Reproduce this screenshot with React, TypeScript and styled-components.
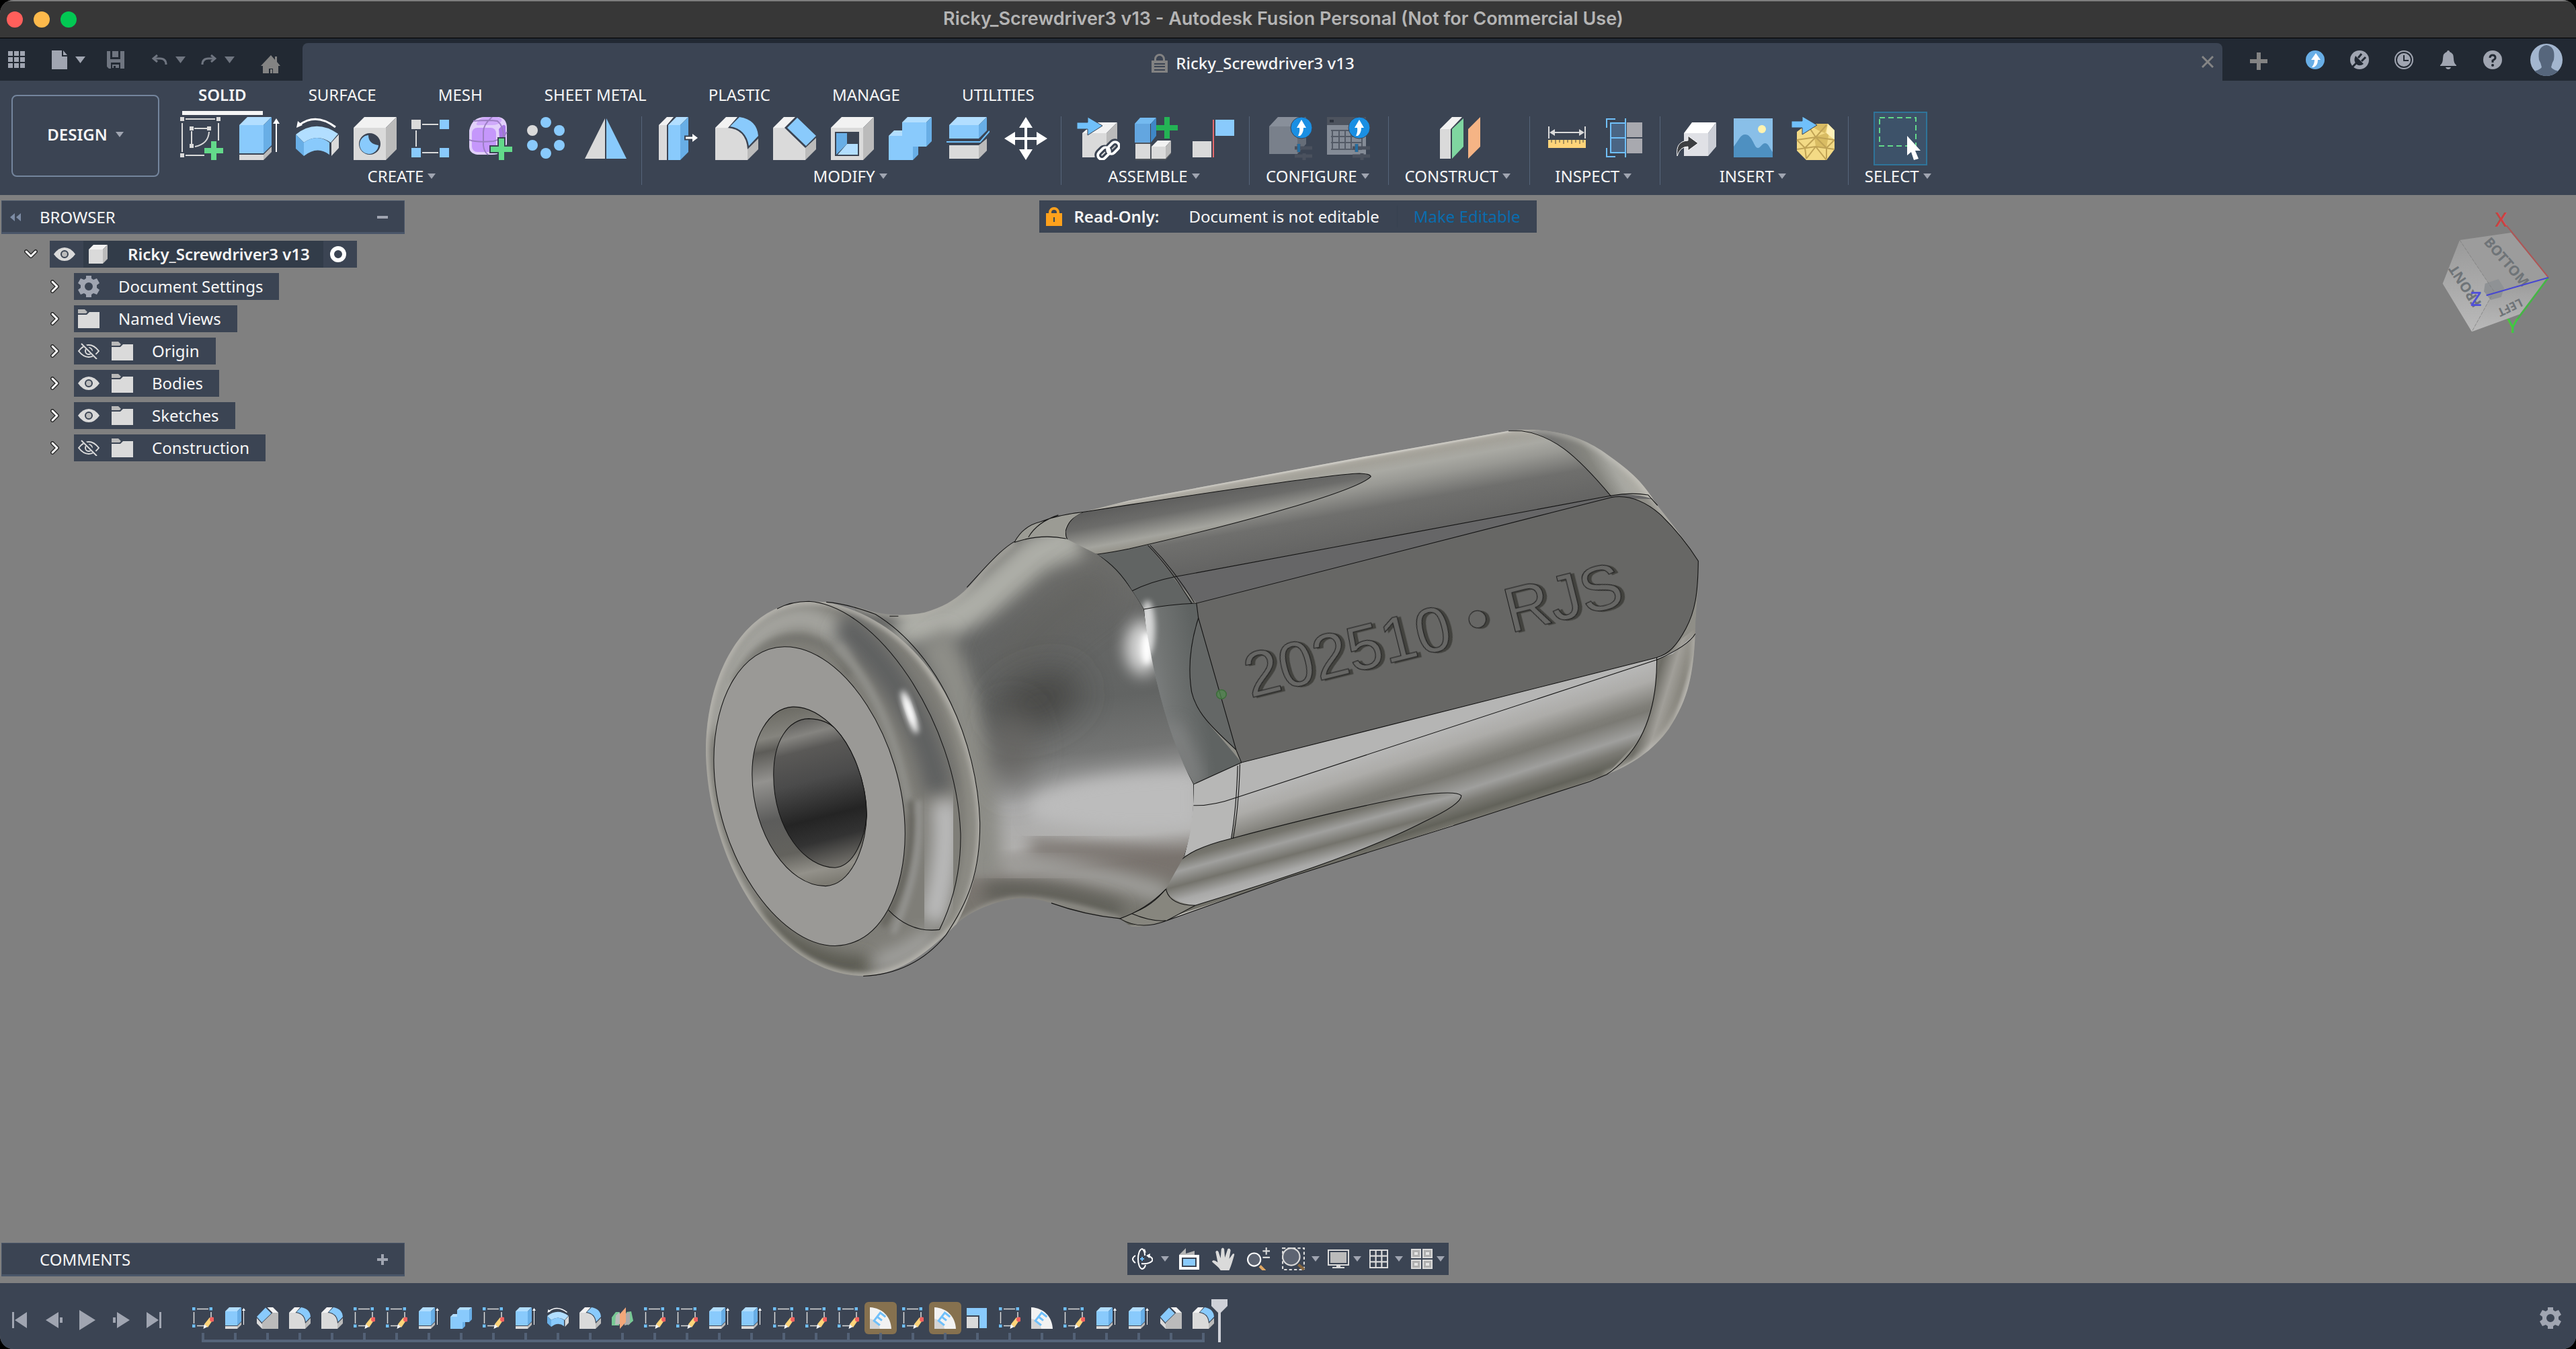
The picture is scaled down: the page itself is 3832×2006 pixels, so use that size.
import React from 'react';
import styled, { createGlobalStyle, css } from 'styled-components';

const color = {
  chrome: '#222933',
  panel: '#3b4453',
  panelDark: '#323c49',
  edge: '#4a5669',
  line: '#56657a',
  text: '#f5f5f5',
  muted: '#a0a5b1',
  dim: '#6f7580',
  canvas: '#808080',
  blue: '#89cafc',
  blueLight: '#b2deff',
  blueDark: '#68aee6',
  gray: '#dadada',
  grayLight: '#f2f2f2',
  grayDark: '#bbbbbb',
  green: '#63d98a',
};

const Global = createGlobalStyle`
  html, body { margin: 0; background: #000; }
  body { font-family: "Noto Sans", "Open Sans", sans-serif; font-size: 24px; line-height: 32px; color: ${color.text}; }
  *, *::before, *::after { box-sizing: border-box; }
  button { font: inherit; color: inherit; background: none; border: 0; padding: 0; margin: 0; cursor: pointer; }
  ul, ol { list-style: none; margin: 0; padding: 0; }
  svg { display: block; flex: none; }
`;

/* ---------- shared icon pieces ---------- */

type IconProps = { w?: number; h?: number; box?: string; children: React.ReactNode };
const Svg = ({ w = 64, h = 64, box = '0 0 64 64', children }: IconProps) => (
  <svg width={w} height={h} viewBox={box} fill="none" aria-hidden="true">{children}</svg>
);
const P = ({ d, f }: { d: string; f: string }) => <path d={d} fill={f} />;

const Caret = ({ w = 12, h = 8, fill = color.muted }: { w?: number; h?: number; fill?: string }) => (
  <svg width={w} height={h} viewBox="0 0 12 8" aria-hidden="true"><path d="M0 0H12L6 8Z" fill={fill} /></svg>
);

const Cube = () => (
  <>
    <P d="M0 16H48V64H0Z" f={color.gray} />
    <P d="M0 16L16 0H64L48 16Z" f={color.grayLight} />
    <P d="M48 16L64 0V48L48 64Z" f={color.grayDark} />
  </>
);

const Badge = () => (
  <>
    <circle cx="48" cy="16" r="16" fill="#1a8fe3" stroke={color.panel} />
    <path d="M48 4L55 16H51Q51 24 46 28H43Q46 22 45 16H41Z" fill="#fff" />
    <path d="M44 40V52M38 46H64M52 54V64M38 58H64" stroke="#4a515e" strokeWidth="5" />
    <path d="M44 40V52" stroke="#256d9f" strokeWidth="4" />
  </>
);

const icons: Record<string, React.ReactNode> = {
  sketchNew: (
    <>
      <path d="M8 3H52M3 9V52M57 9V35M8 57H36M17 21V40M21 17H40M43 22Q42 40 22 44" stroke={color.gray} strokeWidth="2" />
      <path d="M0 0h6v6H0zM54 0h6v6h-6zM0 54h6v6H0zM14 14h6v6h-6zM40 14h6v6h-6zM14 40h6v6h-6z" fill={color.gray} />
      <path d="M46 36h8v10h10v8H54v10h-8V54H36v-8h10z" fill={color.green} />
    </>
  ),
  extrude: (
    <>
      <P d="M2 12H38V54H2Z" f={color.blue} />
      <P d="M2 12L14 0H50L38 12Z" f={color.blueLight} />
      <P d="M38 12L50 0V42L38 54Z" f={color.blueDark} />
      <P d="M2 56H38V64H2Z" f={color.gray} />
      <P d="M38 56L50 44V52L38 64Z" f={color.grayDark} />
      <path d="M57 8V52" stroke="#fff" strokeWidth="2" />
      <P d="M52 10L57 2L62 10Z" f="#fff" />
    </>
  ),
  revolve: (
    <>
      <path d="M59 15Q30 -7 5 12" stroke="#fff" strokeWidth="3" />
      <P d="M1 16L3 6L10 12Z" f="#fff" />
      <P d="M0 26Q30 2 63 25L52 38Q32 24 12 38Z" f={color.blueLight} />
      <P d="M0 26L12 38V58L0 47Z" f={color.blueDark} />
      <P d="M12 38Q32 24 50 38V56Q32 42 12 58Z" f={color.blue} />
      <P d="M53 38L64 26V46L53 58Z" f={color.gray} />
    </>
  ),
  hole: (
    <>
      <Cube />
      <circle cx="24" cy="40" r="16" fill={color.panel} />
      <P d="M22 27Q22 40 37 42A14 14 0 1 1 22 27Z" f={color.blue} />
    </>
  ),
  rectPattern: (
    <>
      <path d="M16 11H40M16 53H40M7 20V44" stroke={color.gray} strokeWidth="2" />
      <P d="M0 4h14v14H0z" f={color.gray} />
      <P d="M42 4h14v14H42zM0 46h14v14H0zM42 46h14v14H42z" f={color.blue} />
    </>
  ),
  form: (
    <>
      <P d="M0 20Q4 0 24 0H44Q56 2 56 16V40Q52 56 34 56H12Q0 54 0 44Z" f="#e2d0fb" />
      <P d="M12 8Q16 0 26 0H42Q50 2 48 6Q44 12 34 12H16Q8 13 12 8Z" f="#cfa9fb" />
      <rect x="4" y="16" width="36" height="36" rx="8" fill="#c597fb" />
      <P d="M44 18Q52 8 54 14V36Q50 46 46 44Z" f="#a877e6" />
      <path d="M0 34Q10 38 36 36Q52 32 56 22M34 0Q20 12 21 24V42Q22 52 28 56M6 6Q30 4 42 6Q52 14 51 34" stroke="#9c7fc4" strokeWidth="2" />
      <path d="M42 30h12v12h12v12H54v12H42V54H30V42h12z" fill={color.panel} />
      <path d="M44 32h8v12h12v8H52v12h-8V52H32v-8h12z" fill={color.green} />
    </>
  ),
  circPattern: (
    <>
      {[[28, 8], [48, 20], [48, 42], [28, 54], [8, 42]].map(([x, y]) => <circle key={`${x}-${y}`} cx={x} cy={y} r="8" fill={color.blue} />)}
      <circle cx="8" cy="20" r="8" fill={color.gray} />
    </>
  ),
  mirror: (
    <>
      <P d="M0 62L30 2V62Z" f={color.gray} />
      <P d="M32 2L62 62H32Z" f={color.blue} />
    </>
  ),
  pressPull: (
    <>
      <P d="M2 12H14V64H2Z" f={color.gray} />
      <P d="M2 12L14 0H24L14 12Z" f={color.grayLight} />
      <P d="M16 12H34V64H16Z" f={color.blue} />
      <P d="M16 12L28 0H46L34 12Z" f={color.blueLight} />
      <P d="M34 12L46 0V52L34 64Z" f={color.blueDark} />
      <path d="M40 31H52" stroke={color.panel} strokeWidth="7" />
      <path d="M42 31H54" stroke="#fff" strokeWidth="3" />
      <P d="M52 25L60 31L52 37Z" f="#fff" />
    </>
  ),
  fillet: (
    <>
      <P d="M0 16H18Q46 18 48 48V64H0Z" f={color.gray} />
      <P d="M0 16L16 0H33L19 16Z" f={color.grayLight} />
      <P d="M22 14L36 0Q62 4 64 28L50 43Q46 18 22 14Z" f={color.blue} />
      <P d="M48 48L64 32V48L48 64Z" f={color.grayDark} />
    </>
  ),
  chamfer: (
    <>
      <P d="M0 16H17L48 46V64H0Z" f={color.gray} />
      <P d="M0 16L16 0H33L17 16Z" f={color.grayLight} />
      <P d="M21 16L36 1L64 28L49 43Z" f={color.blue} />
      <P d="M48 46L64 31V48L48 64Z" f={color.grayDark} />
    </>
  ),
  shell: (
    <>
      <Cube />
      <P d="M6 22H42V58H6Z" f={color.panel} />
      <P d="M8 24H24V40L8 56Z" f={color.blueDark} />
      <P d="M24 40H40V56H10Z" f={color.blueLight} />
    </>
  ),
  combine: (
    <>
      <P d="M0 28H20V8H56V44H36V64H0Z" f={color.blue} />
      <P d="M20 8L28 0H64L56 8ZM0 28L8 20H20V28Z" f={color.blueLight} />
      <P d="M56 8L64 0V36L56 44ZM36 44H44V56L36 64Z" f={color.blueDark} />
    </>
  ),
  split: (
    <>
      <P d="M4 12H48V32H4Z" f={color.blue} />
      <P d="M4 12L16 0H60L48 12Z" f={color.blueLight} />
      <P d="M48 12L60 0V20L48 32Z" f={color.blueDark} />
      <path d="M0 37H50L64 21" stroke="#70c0fa" strokeWidth="2" />
      <P d="M4 42H48V62H4Z" f={color.gray} />
      <P d="M48 42L60 32V50L48 62Z" f={color.grayDark} />
    </>
  ),
  move: (
    <>
      <path d="M32 8V56M8 32H56" stroke="#fff" strokeWidth="4" />
      <P d="M32 0L42 16H22ZM32 64L42 48H22ZM0 32L16 22V42ZM64 32L48 22V42Z" f="#fff" />
    </>
  ),
  insertLink: (
    <>
      <P d="M8 24H44V60H8Z" f={color.gray} />
      <P d="M8 24L26 8H60L44 24Z" f={color.grayLight} />
      <P d="M44 24L60 8V44L44 60Z" f={color.grayDark} />
      <path d="M0 8H16V0L38 13L16 27V18H0Z" fill="#70c0fa" stroke={color.panel} />
      <g strokeWidth="10" stroke={color.panel}><rect x="34" y="46" width="12" height="18" rx="6" transform="rotate(45 40 54)" /><rect x="48" y="36" width="12" height="18" rx="6" transform="rotate(45 54 46)" /></g>
      <g strokeWidth="4" stroke="#fff"><rect x="34" y="44" width="12" height="20" rx="6" transform="rotate(45 40 54)" /><rect x="48" y="36" width="12" height="20" rx="6" transform="rotate(45 54 46)" /></g>
    </>
  ),
  newComponent: (
    <>
      <P d="M0 10H23V38H0Z" f="#63a6e0" />
      <P d="M0 10L8 1H32L24 10Z" f="#74baf0" />
      <P d="M24 10L32 1V28L24 38Z" f="#3f87c7" />
      <P d="M1 40H23V62H1ZM25 44H46V62H25Z" f={color.gray} />
      <P d="M25 44L34 35H54L46 44Z" f={color.grayLight} />
      <P d="M46 44L54 35V53L46 62Z" f={color.grayDark} />
      <path d="M1 39H23M24 40V62M1 63H46L54 54" stroke="#666" strokeWidth="1" />
      <path d="M44 0h8v12h12v8H52v12h-8V20H32v-8h12z" fill="#24b355" />
    </>
  ),
  joint: (
    <>
      <P d="M0 36H28V60H0Z" f={color.gray} />
      <P d="M34 4H62V28H34Z" f={color.blue} />
      <path d="M31 4V60" stroke="#e5696b" strokeWidth="2" />
    </>
  ),
  configBody: (
    <>
      <P d="M0 14H42V55H0Z" f="#79808b" />
      <P d="M0 14L13 0H55L42 14Z" f="#888f9a" />
      <P d="M42 14L55 0V40L42 55Z" f="#666d78" />
      <Badge />
    </>
  ),
  configTable: (
    <>
      <P d="M0 0H58V12H0Z" f="#4d535e" />
      <P d="M0 12H58V56H0Z" f="#848b96" />
      <path d="M6 20H52M6 29H52M6 38H52M6 48H52M8 20V48M18 20V48M27 20V48M36 20V48M52 20V48" stroke="#535a66" strokeWidth="2" />
      <P d="M4 4h6v4H4z" f="#2d333e" />
      <Badge />
    </>
  ),
  plane: (
    <>
      <P d="M2 18H18V62H2Z" f={color.gray} />
      <P d="M2 18L20 0H35L18 18Z" f={color.grayLight} />
      <P d="M20 18L37 2V44L20 62Z" f="#7fd6a0" />
      <P d="M44 18L62 0V44L44 62Z" f="#f5b485" />
    </>
  ),
  measure: (
    <>
      <path d="M5 14V32M59 14V32M10 23H54" stroke={color.gray} strokeWidth="2" />
      <P d="M6 23L14 18V28ZM58 23L50 18V28Z" f={color.gray} />
      <P d="M4 34H60V46H4Z" f="#ffd479" />
      <path d="M9 34v4M15 34v6M21 34v4M27 34v6M33 34v4M39 34v6M45 34v4M51 34v6M56 34v4" stroke="#4a4a44" strokeWidth="1" />
    </>
  ),
  interference: (
    <>
      <P d="M10 8H33V54H10Z" f="#4a6584" />
      <path d="M18 3H5V16M5 46V59H18M33 2V60M10 9H33M10 31H33M10 53H33M11 9V53" stroke="#70c0fa" strokeWidth="2" />
      <P d="M35 8H58V30H35ZM35 32H58V54H35Z" f="#a8a9af" />
    </>
  ),
  derive: (
    <>
      <P d="M12 24H48V58H12Z" f="#e0e1e6" />
      <P d="M12 24L24 8H60L48 24Z" f="#fff" />
      <P d="M48 24L60 8V44L48 58Z" f="#cbced6" />
      <path d="M2 58Q-1 36 18 35V28L33 39L18 50V44Q6 44 2 58Z" fill="#3d3f42" stroke="#fff" />
    </>
  ),
  picture: (
    <>
      <P d="M0 2H58V60H0Z" f="#89bfe8" />
      <circle cx="42" cy="18" r="6" fill="#fff3b0" />
      <P d="M0 44C8 34 10 26 17 26C28 26 30 46 36 46C40 46 42 39 47 39C52 39 54 48 58 52V60H0Z" f="#4e90c1" />
    </>
  ),
  insertMesh: (
    <>
      <P d="M8 22L24 10H54L64 20V48L52 64H22L8 50Z" f="#f3da85" />
      <P d="M24 10H54L50 24L40 20ZM34 30L56 22L52 46L36 44Z" f="#d9bc63" />
      <P d="M54 10L64 20V34L52 24Z" f="#fff0b8" />
      <path d="M8 34L36 30L64 34M8 48L36 44L64 48M36 30L24 12M36 30L52 12M36 44L22 62M36 44L52 64M8 34L20 46L36 30L52 46L64 34M20 46L22 62M52 46V62" stroke="#c0a355" strokeWidth="2" />
      <path d="M0 6H16V-1L38 12L16 26V16H0Z" fill="#70c0fa" stroke={color.panel} />
    </>
  ),
  select: (
    <>
      <path d="M1 1H55V43H1Z" stroke={color.green} strokeWidth="2" strokeDasharray="8 5" />
      <path d="M42 28L62 50H54L59 62L52 64L48 52L42 57Z" fill="#fff" />
    </>
  ),
  sketch: (
    <>
      <path d="M14 5H48M5 14V48M56 14V32M14 55H36" stroke={color.gray} strokeWidth="3" />
      <P d="M0 0h9v9H0zM51 0h9v9h-9zM0 51h9v9H0z" f="#70c0fa" />
      <P d="M36 50L52 30L61 38L46 60Z" f="#ffd479" />
      <P d="M33 64L36 50L45 58Z" f="#fff" />
      <circle cx="59" cy="36" r="7" fill="#f4605f" />
    </>
  ),
  chamferFlip: (
    <g transform="translate(64 0) scale(-1 1)">
      <P d="M0 16H17L48 46V64H0Z" f={color.grayDark} />
      <P d="M0 16L16 0H33L17 16Z" f={color.grayLight} />
      <P d="M21 18L38 1L64 28L49 45Z" f={color.blue} />
      <P d="M48 50L64 32V48L48 64Z" f={color.gray} />
    </g>
  ),
  midplane: (
    <>
      <P d="M0 30L12 14H22V54H0Z" f="#78c995" />
      <P d="M12 24L24 14V50L10 52Z" f="#bcbcbc" />
      <P d="M44 14L58 12L64 40L48 54Z" f="#78c995" />
      <P d="M34 20L54 14V50L38 54Z" f="#aaaaaa" />
      <P d="M24 20L42 0V44L24 64Z" f="#f3a87a" />
    </>
  ),
  emboss: (
    <>
      <P d="M0 0C38 2 62 28 64 64H0Z" f={color.grayLight} />
      <P d="M0 34Q26 38 30 64H0Z" f="#d5d5d5" />
      <path transform="rotate(38 28 33)" d="M40 18H20V48H42M20 33H38" stroke="#70c0fa" strokeWidth="6" />
    </>
  ),
  scale: (
    <>
      <P d="M0 2H60V62H38V24H0Z" f={color.blue} />
      <P d="M0 28H34V62H0Z" f={color.gray} />
    </>
  ),
};

const Icon = ({ name, size = 64 }: { name: string; size?: number }) => <Svg w={size} h={size}>{icons[name]}</Svg>;

/* ---------- window frame ---------- */

const Window = styled.div`
  display: flex;
  flex-direction: column;
  min-height: 100vh;
  background: ${color.canvas};
  border-radius: 20px;
  overflow: hidden;
`;

const TitleBar = styled.header`
  display: grid;
  grid-template-columns: 1fr auto 1fr;
  align-items: center;
  height: 57px;
  padding: 0 24px 0 10px;
  background: #373737;
  border-top: 2px solid #7d7d7d;
  border-bottom: 1px solid #000;
`;

const Lights = styled.div`display: flex; gap: 16px;`;
const Light = styled.button<{ $c: string }>`
  width: 24px;
  height: 24px;
  border-radius: 50%;
  background: ${(p) => p.$c};
`;
const WindowTitle = styled.h1`
  margin: 0;
  padding-bottom: 2px;
  font: 600 27px/32px Inter, sans-serif;
  color: #b4b4b4;
`;

const TopRow = styled.div`
  display: flex;
  height: 63px;
  background: ${color.chrome};
`;
const QuickTools = styled.div`
  display: grid;
  grid-template-columns: 65px 82px 67px 73px 89px auto;
  align-items: center;
  flex: 0 0 450px;
  padding-left: 12px;
`;
const ToolPair = styled.button`display: flex; align-items: center; gap: 12px;`;
const DocTab = styled.div`
  display: flex;
  align-items: center;
  flex: 1;
  margin-top: 7px;
  padding: 0 6px 0 10px;
  background: ${color.panel};
  border-radius: 8px 8px 0 0;
`;
const DocName = styled.div`
  display: flex;
  flex: 1;
  align-items: center;
  justify-content: center;
  gap: 12px;
  padding-top: 4px;
  font-weight: 500;
`;
const SquareButton = styled.button<{ $w?: number }>`
  display: grid;
  place-items: center;
  width: ${(p) => p.$w ?? 32}px;
  height: 48px;
`;
const Account = styled.div`
  display: flex;
  align-items: center;
  gap: 38px;
  flex: 0 0 526px;
  padding-left: 38px;
  > :first-child { margin-right: 16px; }
  > :last-child { margin-left: 4px; }
`;

/* ---------- ribbon ---------- */

const Ribbon = styled.section`
  display: flex;
  height: 170px;
  background: ${color.panel};
`;
const Workspace = styled.button`
  display: flex;
  align-items: center;
  justify-content: center;
  gap: 12px;
  flex: 0 0 220px;
  height: 122px;
  margin: 21px 7px 0 17px;
  padding-bottom: 4px;
  border: 2px solid #74859d;
  border-radius: 8px;
  font-weight: 600;
`;
const RibbonMain = styled.div`flex: 1; min-width: 0;`;
const Tabs = styled.nav`
  display: flex;
  gap: 44px;
  padding-left: 27px;
`;
const Tab = styled.button<{ $active?: boolean }>`
  height: 51px;
  padding: 0 24px 4px;
  border-bottom: 6px solid ${(p) => (p.$active ? color.text : 'transparent')};
  font-weight: ${(p) => (p.$active ? 600 : 400)};
`;
const Groups = styled.div`display: flex; padding: 2px 0 0 1px;`;
const Group = styled.div`
  display: flex;
  flex-direction: column;
  align-items: center;
  gap: 8px;
  height: 102px;
  padding: 1px 20px 0 23px;
  border-right: 1px solid ${color.line};
  &:last-child { border-right: 0; }
`;
const Tools = styled.div`display: flex; gap: 22px;`;
const Tool = styled.button<{ $active?: boolean }>`
  width: 64px;
  height: 64px;
  ${(p) => p.$active && css`
    background: #3d5269;
    box-shadow: 0 0 0 6px #3d5269, 0 0 0 8px #2f7499;
  `}
`;
const GroupLabel = styled.button`
  display: flex;
  align-items: center;
  gap: 6px;
  padding: 0 8px 0 1px;
`;

const groups: { label: string; tools: string[] }[] = [
  { label: 'CREATE', tools: ['sketchNew', 'extrude', 'revolve', 'hole', 'rectPattern', 'form', 'circPattern', 'mirror'] },
  { label: 'MODIFY', tools: ['pressPull', 'fillet', 'chamfer', 'shell', 'combine', 'split', 'move'] },
  { label: 'ASSEMBLE', tools: ['insertLink', 'newComponent', 'joint'] },
  { label: 'CONFIGURE', tools: ['configBody', 'configTable'] },
  { label: 'CONSTRUCT', tools: ['plane'] },
  { label: 'INSPECT', tools: ['measure', 'interference'] },
  { label: 'INSERT', tools: ['derive', 'picture', 'insertMesh'] },
  { label: 'SELECT', tools: ['select'] },
];

/* ---------- viewport ---------- */

const Viewport = styled.main`
  position: relative;
  display: grid;
  grid-template-columns: 1fr auto 1fr;
  grid-template-rows: 1fr auto;
  flex: 1;
  padding: 8px 0;
  background: ${color.canvas};
`;
const Model = styled.svg`
  position: absolute;
  left: calc(50% - 876px);
  top: calc(50% - 469px);
`;
const Panel = styled.section`
  position: relative;
  width: 600px;
  margin-left: 2px;
`;
const PanelHead = styled.div`
  display: flex;
  align-items: center;
  height: 50px;
  padding: 2px 24px 0 12px;
  background: ${color.panel};
  border: 1px solid ${color.edge};
  border-bottom-width: 3px;
`;
const PanelTitle = styled.h2`
  flex: 1;
  margin: 0;
  padding-left: 28px;
  font: inherit;
`;
const PanelIcon = styled.button`display: grid; place-items: center; width: 16px; height: 32px;`;

const Tree = styled.ul`display: grid; gap: 8px; padding-top: 10px;`;
const Row = styled.li<{ $root?: boolean }>`
  display: flex;
  align-items: center;
  gap: 18px;
  height: 40px;
  padding-left: ${(p) => (p.$root ? 34 : 70)}px;
`;
const Chip = styled.div`
  display: flex;
  align-items: center;
  gap: 18px;
  height: 40px;
  padding: 0 24px 0 6px;
  background: ${color.panel};
`;
const ChipText = styled.span`padding-left: 10px;`;
const RootChip = styled.div`display: flex; height: 40px; background: ${color.panel};`;
const RootCell = styled.button`display: grid; place-items: center; width: 50px; height: 40px; padding-right: 6px;`;
const RootName = styled.div`
  display: flex;
  align-items: center;
  gap: 30px;
  padding: 0 20px 0 8px;
  background: ${color.panelDark};
  font-weight: 600;
`;

const ReadOnly = styled.div`
  position: relative;
  display: flex;
  align-items: center;
  align-self: start;
  justify-self: center;
  height: 48px;
  padding: 0 24px 0 10px;
  background: ${color.panel};
`;
const LockLabel = styled.strong`padding: 0 44px 0 17px; font-weight: 600;`;
const Notice = styled.span`padding-right: 26px;`;
const EditLink = styled.a`
  padding-left: 24px;
  border-left: 1px solid #364150;
  color: #0a6cad;
  text-decoration: none;
`;
const CubeBox = styled.div`position: relative; justify-self: end; margin-top: 2px;`;

const NavBar = styled.div`
  position: relative;
  display: flex;
  align-items: center;
  align-self: end;
  justify-self: center;
  height: 48px;
  margin-bottom: 4px;
  padding: 0 6px;
  background: ${color.panel};
`;
const NavItem = styled.button<{ $gap: number; $inner: number }>`
  display: flex;
  align-items: center;
  gap: ${(p) => p.$inner}px;
  margin-right: ${(p) => p.$gap}px;
`;

/* ---------- timeline ---------- */

const Timeline = styled.footer`
  display: flex;
  height: 98px;
  padding: 28px 22px 0 18px;
  background: ${color.panel};
`;
const Player = styled.div`display: flex; gap: 24px; height: 54px; align-items: center; margin-right: 34px;`;
const Track = styled.ol`display: flex; flex: 1;`;
const Step = styled.li<{ $last?: boolean }>`
  display: flex;
  flex-direction: column;
  width: 48px;
  > button { order: -1; }
  &::before {
    content: '';
    position: relative;
    width: 4px;
    height: 10px;
    margin: -2px 0 0 22px;
    background: ${color.line};
    opacity: .9;
  }
  &::after {
    content: '';
    width: ${(p) => (p.$last ? 4 : 48)}px;
    height: 4px;
    margin-left: 22px;
    background: ${color.line};
  }
`;
const Feature = styled.button<{ $hot?: boolean }>`
  display: grid;
  place-items: center;
  width: 48px;
  height: 48px;
  border-radius: 6px;
  background: ${(p) => (p.$hot ? '#86714f' : 'transparent')};
`;
const Marker = styled.li`margin: -4px 0 0 -12px;`;

const features = [
  'sketch', 'extrude', 'chamferFlip', 'fillet', 'fillet', 'sketch', 'sketch', 'extrude', 'combine', 'sketch',
  'extrude', 'revolve', 'fillet', 'midplane', 'sketch', 'sketch', 'extrude', 'extrude', 'sketch', 'sketch',
  'sketch', 'emboss!', 'sketch', 'emboss!', 'scale', 'sketch', 'emboss', 'sketch', 'extrude', 'extrude',
  'chamferFlip', 'fillet',
];

/* ---------- small glyphs ---------- */

const Eye = () => (
  <Svg w={32} h={20} box="0 0 32 20">
    <P d="M0 10Q7 0 16 0T32 10Q25 20 16 20T0 10Z" f={color.gray} />
    <circle cx="16" cy="10" r="5" fill={color.grayDark} stroke={color.panel} strokeWidth="2" />
  </Svg>
);
const EyeOff = () => (
  <Svg w={32} h={24} box="0 0 32 24">
    <path d="M1 12Q8 3 16 3T31 12Q24 21 16 21T1 12Z" stroke={color.gray} strokeWidth="2" />
    <circle cx="16" cy="12" r="5" stroke={color.gray} strokeWidth="2" />
    <path d="M6 0L29 23" stroke={color.panel} strokeWidth="5" />
    <path d="M5 1L28 24" stroke={color.gray} strokeWidth="2" />
  </Svg>
);
const Folder = () => (
  <Svg w={32} h={28} box="0 0 32 28">
    <P d="M0 0H10L14 4L12 6H0Z" f="#b9b9b9" />
    <P d="M0 8H13L17 4H32V28H0Z" f={color.gray} />
  </Svg>
);
const Gear = ({ size = 32 }: { size?: number }) => (
  <Svg w={size} h={size} box="0 0 32 32">
    <path fill={color.muted} fillRule="evenodd" d="M12 0h8v4l3 2 5-2 4 7-4 3v4l4 3-4 7-5-2-3 2v4h-8v-4l-3-2-5 2-4-7 4-3v-4l-4-3 4-7 5 2 3-2zM16 10a6 6 0 1 0 0 12a6 6 0 0 0 0-12z" />
  </Svg>
);
const Chevron = ({ open }: { open?: boolean }) => (
  <Svg w={20} h={20} box="0 0 20 20">
    <g transform={open ? 'rotate(90 10 10)' : undefined} strokeLinecap="round" strokeLinejoin="round">
      <path d="M6 3L13 10L6 17" stroke="#2b2b2b" strokeWidth="6" />
      <path d="M6 3L13 10L6 17" stroke="#fff" strokeWidth="3" />
    </g>
  </Svg>
);
const UndoGlyph = ({ flip }: { flip?: boolean }) => (
  <Svg w={23} h={16} box="0 0 23 16">
    <g transform={flip ? 'translate(23 0) scale(-1 1)' : undefined} stroke={color.dim} strokeWidth="3">
      <path d="M2 6H12Q21 6 21 15" /><path d="M8 1L2 6L8 11" />
    </g>
  </Svg>
);

const treeItems: { name: string; kind: 'gear' | 'folder'; eye?: 'on' | 'off' }[] = [
  { name: 'Document Settings', kind: 'gear' },
  { name: 'Named Views', kind: 'folder' },
  { name: 'Origin', kind: 'folder', eye: 'off' },
  { name: 'Bodies', kind: 'folder', eye: 'on' },
  { name: 'Sketches', kind: 'folder', eye: 'on' },
  { name: 'Construction', kind: 'folder', eye: 'off' },
];

/* ---------- 3D model drawing ---------- */

const stops = (list: [number, string][]) => list.map(([o, c]) => <stop key={o} offset={o} stopColor={c} />);

const lipPath = 'M350 500C170 503 60 690 57 900C60 1200 250 1512 505 1516C620 1512 700 1440 770 1375C815 1300 837 1210 837 1100C830 850 690 560 400 502Z';
const neckPath = 'M480 512C540 534 600 545 680 530C780 505 820 445 850 410C880 380 905 355 935 338L975 328Q1030 318 1082 330L1172 373C1230 415 1262 455 1303 521C1330 720 1380 880 1444 996C1446 1090 1436 1140 1418 1190L1366 1280Q1310 1335 1235 1360C1150 1352 1090 1335 1040 1318C1000 1306 975 1304 950 1305C880 1310 800 1345 770 1375L600 1300L500 700Z';
const bodyPath = 'M-213 372C-190 335 -160 320 -123 309L0 276L640 148L1005 78C1120 65 1200 95 1260 140C1340 200 1360 225 1400 290C1440 345 1475 390 1508 448C1508 540 1500 620 1500 655C1494 790 1475 850 1430 925C1390 985 1330 1030 1260 1057L1220 1075L860 1200L420 1348L100 1470Q35 1492 5 1487L-25 1465L97 1370L-85 430Z';
const upperFlute = 'M640 208C600 250 300 340 0 413Q-50 424 -86 429C-140 422 -170 400 -169 363Q-160 325 -123 309L0 288C300 238 560 200 610 199Q640 200 640 208Z';
const lowerFlute = 'M880 1115C870 1103 820 1106 760 1115C600 1145 400 1200 270 1237C190 1258 150 1280 120 1315C100 1345 95 1365 98 1385Q110 1427 175 1427C300 1385 600 1290 780 1190Q880 1140 880 1115Z';

const EngravedText = styled.text`
  font: 94px "Liberation Sans", Arial, sans-serif;
  fill: #676765;
  stroke: #1a1a1a;
  stroke-width: 1px;
  filter: drop-shadow(5px 2px 0 #42423e);
`;

const ScrewdriverHandle = () => (
  <Model width="1500" height="830" viewBox="1040 630 1500 830" fill="none" role="img" aria-label="Screwdriver handle">
    <defs>
      <filter id="b10" x="-50%" y="-50%" width="200%" height="200%"><feGaussianBlur stdDeviation="8" /></filter>
      <filter id="b20" x="-50%" y="-50%" width="200%" height="200%"><feGaussianBlur stdDeviation="22" /></filter>
      <filter id="b30" x="-100%" y="-100%" width="300%" height="300%"><feGaussianBlur stdDeviation="46" /></filter>
      <clipPath id="lipClip"><path d={lipPath} /></clipPath>
      <clipPath id="neckClip"><path d={neckPath} /></clipPath>
      <clipPath id="bodyClip"><path d={bodyPath} /></clipPath>
      <linearGradient id="gTop" gradientUnits="userSpaceOnUse" x1="800" y1="118" x2="845" y2="348">{stops([[0, '#cfcdc6'], [0.03, '#a19e95'], [0.2, '#a9a9a3'], [0.35, '#999994'], [0.62, '#6f6f6d'], [1, '#646463']])}</linearGradient>
      <linearGradient id="gBottom" gradientUnits="userSpaceOnUse" x1="900" y1="905" x2="987" y2="1155">{stops([[0, '#b7b7b6'], [0.18, '#adaca9'], [0.42, '#807f79'], [0.48, '#7b7a74'], [0.68, '#9f9f9d'], [0.8, '#7c7b75'], [0.93, '#62625a'], [1, '#77766e']])}</linearGradient>
      <linearGradient id="gGrooveT" gradientUnits="userSpaceOnUse" x1="0" y1="288" x2="24" y2="410">{stops([[0, '#5e5e5d'], [0.35, '#6c6c6a'], [0.8, '#a4a49e'], [1, '#939188']])}</linearGradient>
      <linearGradient id="gGrooveB" gradientUnits="userSpaceOnUse" x1="300" y1="1222" x2="345" y2="1375">{stops([[0, '#6a6a62'], [0.15, '#77766f'], [0.35, '#a0a09e'], [0.6, '#74736c'], [0.85, '#a9a9a8'], [1, '#b4b4b3']])}</linearGradient>
      <linearGradient id="gCap" gradientUnits="userSpaceOnUse" x1="1180" y1="210" x2="1330" y2="130">{stops([[0, '#757573'], [0.35, '#85857f'], [0.6, '#a6a6a0'], [1, '#b8b5ab']])}</linearGradient>
      <linearGradient id="gCapB" gradientUnits="userSpaceOnUse" x1="1340" y1="850" x2="1480" y2="890">{stops([[0, '#7d7c76'], [0.25, '#6e6d66'], [0.5, '#a19f99'], [0.75, '#86847c'], [1, '#c9c7c2']])}</linearGradient>
      <linearGradient id="gFacet" gradientUnits="userSpaceOnUse" x1="60" y1="800" x2="190" y2="780">{stops([[0, '#7c7f7f'], [0.35, '#717473'], [1, '#5f6362']])}</linearGradient>
      <linearGradient id="gNeck" gradientUnits="userSpaceOnUse" x1="1000" y1="400" x2="1100" y2="1340">{stops([[0, '#70706d'], [0.2, '#656665'], [0.4, '#626463'], [0.55, '#747574'], [0.68, '#aaaaaa'], [0.8, '#b0afad'], [0.88, '#7b7570'], [1, '#77766f']])}</linearGradient>
      <linearGradient id="gHole" gradientUnits="userSpaceOnUse" x1="340" y1="818" x2="440" y2="1222">{stops([[0, '#63625f'], [0.1, '#858480'], [0.2, '#5a5957'], [0.4, '#4b4b4b'], [0.65, '#242424'], [0.8, '#333'], [1, '#77756f']])}</linearGradient>
      <linearGradient id="gChamfer" gradientUnits="userSpaceOnUse" x1="260" y1="790" x2="360" y2="1272">{stops([[0, '#6a6962'], [0.15, '#85847e'], [0.22, '#5d5c58'], [0.38, '#93928f'], [0.6, '#5c5c5b'], [0.8, '#63625d'], [0.92, '#93918a'], [1, '#7d7b73']])}</linearGradient>
    </defs>

    {/* hexagonal grip */}
    <g transform="translate(1680 600) scale(.56122 .52296)">
      <g clipPath="url(#bodyClip)">
        <path d={bodyPath} fill="#8f8e87" />
        <path d="M-240 400L-150 300L1005 60L1277 60V262L120 493L7 533Z" fill="url(#gTop)" />
        <path d="M1050 78C1120 92 1180 140 1277 264L1390 272L1520 448L1500 60Z" fill="url(#gCap)" />
        <path d="M-110 300L640 148L1005 78C1120 65 1200 95 1260 140C1340 200 1360 225 1400 290L1508 448" stroke="#d2d0ca" strokeWidth="8" filter="url(#b10)" />
        <path d="M285 1118L1400 726V900L1265 1055L860 1210L100 1490L-40 1480L145 1287Z" fill="url(#gBottom)" />
        <path d="M1398 723L1500 640L1520 900L1260 1060Q1400 960 1398 723Z" fill="url(#gCapB)" />
        <path d="M1500 660C1494 790 1475 850 1430 925C1390 985 1330 1030 1260 1057" stroke="#cfcdc8" strokeWidth="9" filter="url(#b10)" />
        <path d="M100 1466L860 1200" stroke="#c5c3bd" strokeWidth="4" />
        <path d="M297 1021L1397 723Q1470 700 1500 655L1440 712L285 1120Z" fill="#b5b5b4" />
        <path d="M116 493L1277 262Q1330 252 1390 272L1277 268L178 568Z" fill="#666667" />
        <path d="M178 568L1277 267C1325 258 1370 280 1410 318C1450 360 1480 400 1508 448C1507 540 1500 590 1475 640C1450 690 1430 712 1397 723L297 1021L283 985L183 610Z" fill="#676765" />
        <path d="M-85 430L49 403L170 568L38 585L7 533Z" fill="#616463" />
        <path d="M38 585Q100 572 178 568L183 610Q150 720 165 820C180 890 240 940 297 1021L170 1083C110 970 55 810 38 585Z" fill="url(#gFacet)" />
        <ellipse cx="48" cy="640" rx="20" ry="80" fill="#fff" filter="url(#b10)" opacity=".7" />
        <path d="M183 610Q150 720 165 820C180 880 225 930 283 985Z" fill="#646766" />
        <path d="M110 910Q160 1000 175 1090" stroke="#8a8b8b" strokeWidth="40" filter="url(#b20)" opacity=".7" />
        <path d="M170 1083L297 1021L290 1120L270 1237L145 1287Q170 1190 170 1083Z" fill="#b7b7b6" />
        <path d={upperFlute} fill="url(#gGrooveT)" />
        <path d={lowerFlute} fill="url(#gGrooveB)" />
        <path d="M97 1380L5 1450L-25 1465L35 1492L100 1470L175 1427Q110 1420 97 1380Z" fill="#87867e" />
      </g>
      <g stroke="#131313" strokeWidth="2">
        <path d={upperFlute} />
        <path d={lowerFlute} />
        <path d="M1005 78H1040C1120 90 1180 140 1277 264M120 493L1277 262Q1330 252 1375 260L1400 290M1277 267L178 568L183 610L283 985L297 1021L1397 723M1277 267C1325 258 1370 280 1410 318C1450 360 1480 400 1508 448C1507 540 1500 590 1475 640C1450 690 1430 712 1397 723" />
        <path d="M1500 655Q1480 690 1400 728L285 1120Q220 1145 170 1143M1398 723Q1400 960 1265 1055L1220 1075L860 1200L420 1348L100 1470" />
        <path d="M-85 430Q-30 465 7 533L38 585Q100 572 178 568M7 533Q55 507 120 493M49 403Q110 470 165 568M55 403Q120 475 172 566M38 585C55 810 110 970 170 1083L297 1021M183 610Q150 720 165 820C180 890 240 940 283 985M170 1083Q170 1190 145 1287M287 1030Q284 1150 270 1237M293 1026Q290 1150 275 1237" />
        <path d="M97 1380Q60 1430 5 1450L-25 1465Q30 1500 100 1470L175 1427M5 1450Q60 1475 100 1470" />
      </g>
      <circle cx="244" cy="827" r="13" fill="#4f8a4c" fillOpacity=".7" stroke="#3d6d3b" strokeWidth="3" />
    </g>

    {/* concave neck */}
    <g transform="translate(1020 620) scale(.52296 .54847)">
      <g clipPath="url(#neckClip)">
        <path d={neckPath} fill="url(#gNeck)" />
        <path d="M600 560C760 590 860 480 1000 370L1120 330" stroke="#adaea7" strokeWidth="100" filter="url(#b20)" />
        <path d="M700 600Q840 800 850 1250" stroke="#8d8d87" strokeWidth="100" filter="url(#b20)" />
        <path d="M1200 440Q1000 560 900 700" stroke="#62625f" strokeWidth="110" filter="url(#b30)" opacity=".7" />
        <ellipse cx="1000" cy="770" rx="130" ry="70" transform="rotate(-20 1000 770)" fill="#464645" filter="url(#b30)" />
        <ellipse cx="930" cy="900" rx="50" ry="110" fill="#666562" filter="url(#b30)" />
        <path d="M980 1040Q1100 960 1460 960V1120Q1200 1140 980 1090Z" fill="#bcbcbc" filter="url(#b20)" />
        <path d="M980 1165Q1200 1175 1440 1220" stroke="#78726d" strokeWidth="44" filter="url(#b20)" />
        <path d="M900 1220Q1150 1225 1370 1295" stroke="#a6a6a3" strokeWidth="44" filter="url(#b20)" />
        <path d="M850 1290Q1000 1262 1240 1345" stroke="#5c5b55" strokeWidth="46" filter="url(#b20)" />
        <path d="M770 1380Q860 1310 950 1308T1235 1362" stroke="#c2c0ba" strokeWidth="7" filter="url(#b10)" />
        <path d="M480 512C540 534 600 545 680 530C780 505 820 445 850 410L935 338" stroke="#bab8b0" strokeWidth="10" filter="url(#b10)" />
        <ellipse cx="1300" cy="625" rx="50" ry="74" fill="#fff" filter="url(#b20)" opacity=".75" />
        <ellipse cx="1312" cy="628" rx="16" ry="44" fill="#fff" filter="url(#b10)" />
      </g>
      <path d="M935 340Q960 295 1010 284Q1060 265 1130 258Q1088 278 1080 300V328Q1010 316 935 340Z" fill="#9b9b94" />
      <g stroke="#131313" strokeWidth="2">
        <path d="M935 340Q960 295 1010 284Q1060 265 1130 258M1082 330Q1010 316 935 340M975 326Q1000 285 1060 266" />
        <path d="M935 338C905 355 880 380 850 410L800 462M580 540H605M1366 1280Q1310 1335 1235 1360C1150 1352 1090 1335 1040 1318" />
      </g>

      {/* collar */}
      <g clipPath="url(#lipClip)">
        <path d={lipPath} fill="#7f7e78" />
        <path d="M90 860C110 680 200 540 340 545Q420 560 470 640" stroke="#a8a8a3" strokeWidth="60" filter="url(#b20)" />
        <path d="M140 720Q200 610 300 600T470 700" stroke="#69686180" strokeWidth="26" filter="url(#b10)" />
        <path d="M440 560C600 680 700 880 720 1020" stroke="#5f6160" strokeWidth="80" filter="url(#b20)" />
        <path d="M430 620Q590 780 640 1080" stroke="#8f8f8a" strokeWidth="22" filter="url(#b10)" />
        <path d="M735 1040Q755 1180 700 1370" stroke="#bababa" strokeWidth="76" filter="url(#b20)" />
        <path d="M640 1040Q660 1220 560 1380" stroke="#63625b" strokeWidth="18" filter="url(#b10)" />
        <path d="M662 1040Q676 1220 590 1400" stroke="#9a9a97" strokeWidth="14" filter="url(#b10)" />
        <path d="M200 1350Q330 1490 520 1490" stroke="#55544c" strokeWidth="50" filter="url(#b20)" />
        <path d="M540 1480Q630 1460 700 1400" stroke="#a8a8a6" strokeWidth="40" filter="url(#b20)" />
        <path d="M560 540C720 650 815 900 812 1100Q810 1260 740 1400" stroke="#8b8a83" strokeWidth="30" filter="url(#b10)" />
        <path d={lipPath} stroke="#cac8c1" strokeWidth="12" filter="url(#b10)" />
        <ellipse cx="637" cy="800" rx="12" ry="62" transform="rotate(-20 637 800)" fill="#fff" filter="url(#b10)" />
        <ellipse cx="637" cy="796" rx="6" ry="36" transform="rotate(-20 637 796)" fill="#fff" filter="url(#b10)" />
      </g>
      <g stroke="#131313" strokeWidth="2">
        <path d="M260 520Q300 500 350 500C540 510 770 820 782 1130Q784 1270 722 1390Q640 1400 577 1337" />
        <path d="M400 502Q450 504 540 535C720 640 830 880 837 1100C838 1240 800 1320 740 1405Q650 1510 505 1516" />
        <path d="M280 623C160 625 80 760 80 930C80 1180 260 1434 425 1434C560 1430 624 1280 624 1130C624 880 450 620 280 623Z" fill="#9a9996" />
        <path d="M305 786C235 790 188 870 189 970C190 1130 290 1272 398 1272C470 1268 512 1170 515 1080C515 1000 480 900 425 845C390 810 350 785 305 786Z" fill="url(#gChamfer)" />
        <path d="M350 818C290 820 250 880 250 970C250 1120 340 1222 425 1222C480 1218 510 1140 515 1080C514 980 470 890 425 845Q400 820 350 818Z" fill="url(#gHole)" />
      </g>
    </g>

    <EngravedText x="1860" y="1038" transform="rotate(-14 1860 1038)">202510 • RJS</EngravedText>
  </Model>
);

const CubeText = styled.text<{ $c: string; $s: number; $w?: number }>`
  font-family: "Noto Sans", sans-serif;
  font-size: ${(p) => p.$s}px;
  font-weight: ${(p) => p.$w ?? 700};
  fill: ${(p) => p.$c};
`;

const ViewCube = () => (
  <svg width="232" height="220" viewBox="0 0 696 660" role="img" aria-label="View cube">
    <defs>
      <linearGradient id="cf" x1="0" y1="0" x2="0" y2="1">{stops([[0, '#9a9a9a'], [1, '#bababa']])}</linearGradient>
    </defs>
    <path d="M177 171L406 138L573 338L330 400Z" fill="#9c9c9c" />
    <path d="M177 171L330 400L231 580L101 365Z" fill="url(#cf)" />
    <path d="M330 400L573 338L445 502L231 580Z" fill="url(#cf)" />
    <path d="M290 365L350 345L375 385L362 425L315 438L285 400Z" fill="#8f9295" />
    <path d="M177 171L330 400L231 580" stroke="#7b7b7b" strokeWidth="2" strokeDasharray="14 6" fill="none" />
    <CubeText $c="#6f7478" $s={62} transform="translate(282 182) rotate(49)">BOTTOM</CubeText>
    <CubeText $c="#6f7478" $s={62} transform="translate(276 452) rotate(237)">FRONT</CubeText>
    <CubeText $c="#6f7478" $s={52} transform="translate(446 430) rotate(154)">LEFT</CubeText>
    <path d="M386 106L573 338" stroke="#b05555" strokeWidth="6" />
    <path d="M573 338L430 530" stroke="#46b546" strokeWidth="8" />
    <path d="M573 338L296 418" stroke="#4747d1" strokeWidth="6" />
    <CubeText $c="#cf4141" $s={88} $w={500} x="335" y="110">X</CubeText>
    <CubeText $c="#40c840" $s={88} $w={500} x="388" y="584">Y</CubeText>
    <CubeText $c="#5050d8" $s={88} $w={500} x="224" y="464">Z</CubeText>
  </svg>
);

/* ---------- page ---------- */

const navTools: { label: string; w: number; gap: number; inner?: number; art: React.ReactNode }[] = [
  {
    label: 'Orbit', w: 32, gap: 14, inner: 12,
    art: <><path d="M16 1C8 3 8 29 16 31Q20 30 21 25M20 11Q20 3 16 1M6 11Q-2 16 6 22M24 11Q33 14 31 19Q26 24 15 23" stroke="#fff" strokeWidth="2" /><path d="M17 4L22 7L20 1ZM22 11L28 8L27 15Z" fill="#fff" /><path d="M16 13V19M13 16H19" stroke="#70c0fa" strokeWidth="2" /></>,
  },
  {
    label: 'Look at', w: 32, gap: 18,
    art: <><path d="M1 10L11 0V8L24 4V10Z" fill="#b5b5b5" /><path d="M1 10H31V32H1Z" fill="#fff" /><path d="M5 14H27V28H5Z" fill={color.panel} /><path d="M7 16H25V26H7Z" fill={color.blue} /></>,
  },
  {
    label: 'Pan', w: 34, gap: 18,
    art: <path d="M12 32C9 27 4 24 0 20C1 17 4 18 8 21L5 6Q7 3 9 6L12 15L13 2Q15 -1 17 2L18 14L22 2Q25 0 26 4L24 16L29 9Q32 8 31 11C29 18 27 25 24 32Z" fill={color.gray} />,
  },
  {
    label: 'Zoom', w: 34, gap: 18,
    art: <><circle cx="10" cy="17" r="9" fill="#5d6472" stroke="#fff" strokeWidth="2" /><path d="M18 26L25 33" stroke="#e0a763" strokeWidth="4" /><path d="M27 0V10M22 5H32M22 14H32" stroke={color.gray} strokeWidth="2" /></>,
  },
  {
    label: 'Fit', w: 34, gap: 12, inner: 10,
    art: <><path d="M1 1H31V31H1Z" stroke={color.gray} strokeWidth="2" strokeDasharray="4 3" /><circle cx="13" cy="13" r="12" fill="#5d6472" stroke={color.gray} strokeWidth="2" /><path d="M23 24L31 31" stroke="#85663f" strokeWidth="4" /></>,
  },
  {
    label: 'Display settings', w: 32, gap: 12, inner: 6,
    art: <><path d="M0 2H32V26H0Z" fill={color.gray} /><path d="M2 4H30V24H2Z" fill={color.panel} /><path d="M4 6H28V22H4Z" fill={color.grayDark} /><path d="M13 26H19V28H25V30H7V28H13Z" fill={color.gray} /></>,
  },
  {
    label: 'Grid and snaps', w: 28, gap: 12, inner: 10,
    art: <path d="M1 1H31V31H1ZM11 1V31M21 1V31M1 11H31M1 21H31" stroke={color.gray} strokeWidth="2.5" />,
  },
  {
    label: 'Viewports', w: 32, gap: 0, inner: 6,
    art: <>{[[0, 1], [17, 1], [0, 17], [17, 17]].map(([x, y]) => <g key={`${x}${y}`}><rect x={x} y={y} width="15" height="14" fill={color.gray} /><rect x={x + 2} y={y + 2} width="11" height="10" fill="#b0b0b0" /><rect x={x + 5} y={y + 5} width="5" height="4" fill="#e4e4e4" /></g>)}</>,
  },
];

const player: { label: string; d: string }[] = [
  { label: 'Go to start', d: 'M0 4H3V28H0ZM22 4V28L4 16Z' },
  { label: 'Step back', d: 'M0 16L19 4V28ZM21 12H25V20H21Z' },
  { label: 'Play', d: 'M0 1L24 16L0 31Z' },
  { label: 'Step forward', d: 'M0 12H4V20H0ZM6 4V28L25 16Z' },
  { label: 'Go to end', d: 'M0 4V28L18 16ZM19 4H22V28H19Z' },
];

export default function App() {
  return (
    <Window>
      <Global />
      <TitleBar>
        <Lights>
          <Light $c="#ff5f5b" aria-label="Close window" />
          <Light $c="#fdb94b" aria-label="Minimize window" />
          <Light $c="#02c853" aria-label="Zoom window" />
        </Lights>
        <WindowTitle>Ricky_Screwdriver3 v13 - Autodesk Fusion Personal (Not for Commercial Use)</WindowTitle>
      </TitleBar>

      <TopRow>
        <QuickTools>
          <ToolPair aria-label="Data panel">
            <Svg w={26} h={26} box="0 0 26 26">
              {[0, 9, 18].map((y) => [0, 9, 18].map((x) => <rect key={`${x}-${y}`} x={x} y={y} width="7" height="7" fill={color.muted} />))}
            </Svg>
          </ToolPair>
          <ToolPair aria-label="File">
            <Svg w={23} h={28} box="0 0 23 28"><P d="M0 0H15V9H23V28H0ZM17 0L23 7H17Z" f={color.muted} /></Svg>
            <Caret w={15} h={10} />
          </ToolPair>
          <ToolPair aria-label="Save">
            <Svg w={26} h={26} box="0 0 26 26"><path fill={color.dim} fillRule="evenodd" d="M0 0H5V12H20V0H26V26H3L0 23ZM8 0H17V9H8ZM6 17V26H20V17ZM8 20H18V25H8ZM10 22H13V25H10Z" /></Svg>
          </ToolPair>
          <ToolPair aria-label="Undo"><UndoGlyph /><Caret w={15} h={10} fill={color.dim} /></ToolPair>
          <ToolPair aria-label="Redo"><UndoGlyph flip /><Caret w={15} h={10} fill={color.dim} /></ToolPair>
          <ToolPair aria-label="Home">
            <Svg w={29} h={40} box="0 0 29 40"><P d="M15 13L21 20V15H24V23L29 29H26V40H18V33H12V40H3V29H0ZM14 34H17V40H14Z" f="#838383" /></Svg>
          </ToolPair>
        </QuickTools>
        <DocTab>
          <DocName>
            <Svg w={24} h={28} box="0 0 24 28"><path fill="#828282" fillRule="evenodd" d="M4 10V8A8 8 0 0 1 20 8V10H24V28H0V10ZM7 10H17V8A5 5 0 0 0 7 8ZM4 14H20V16H4ZM4 18H20V20H4ZM4 23H20V25H4Z" /></Svg>
            <span>Ricky_Screwdriver3 v13</span>
          </DocName>
          <SquareButton aria-label="Close tab">
            <Svg w={18} h={18} box="0 0 18 18"><path d="M1 1L17 17M17 1L1 17" stroke="#858585" strokeWidth="3" /></Svg>
          </SquareButton>
        </DocTab>
        <Account>
          <SquareButton aria-label="New tab"><Svg w={26} h={30} box="0 0 26 30"><path d="M13 4V30M0 17H26" stroke="#838383" strokeWidth="6" /></Svg></SquareButton>
          <SquareButton aria-label="Updates" $w={28}><Svg w={28} h={28} box="0 0 28 28"><circle cx="14" cy="14" r="14" fill="#68aee6" /><P d="M15 4L22 14H18Q18 22 12 25H9Q13 20 13 14H8Z" f="#fff" /></Svg></SquareButton>
          <SquareButton aria-label="Extensions" $w={28}>
            <Svg w={28} h={28} box="0 0 28 28">
              <circle cx="14" cy="14" r="14" fill={color.muted} />
              <P d="M8 8L20 20Q15 24 10 21Q4 16 8 8Z" f={color.chrome} />
              <path d="M12 11L17 5M17 16L23 10" stroke={color.chrome} strokeWidth="3" />
              <path d="M10 18L3 25" stroke={color.chrome} strokeWidth="3" />
            </Svg>
          </SquareButton>
          <SquareButton aria-label="Job status" $w={28}><Svg w={28} h={28} box="0 0 28 28"><circle cx="14" cy="14" r="14" fill={color.muted} /><circle cx="14" cy="14" r="11" fill={color.muted} stroke={color.chrome} strokeWidth="2" /><path d="M14 7V15H21" stroke={color.chrome} strokeWidth="2" /></Svg></SquareButton>
          <SquareButton aria-label="Notifications" $w={28}><Svg w={24} h={28} box="0 0 24 28"><P d="M10 2Q10 0 12 0T14 2Q20 4 20 12Q20 19 24 22V23H0V22Q4 19 4 12Q4 4 10 2ZM8 25H16Q15 28 12 28T8 25Z" f={color.muted} /></Svg></SquareButton>
          <SquareButton aria-label="Help" $w={28}><Svg w={28} h={28} box="0 0 28 28"><circle cx="14" cy="14" r="14" fill={color.muted} /><path d="M10 11Q10 7 14 7T18 11Q18 13 14 15V18" stroke={color.chrome} strokeWidth="3" /><circle cx="14" cy="22" r="2" fill={color.chrome} /></Svg></SquareButton>
          <SquareButton aria-label="Profile" $w={48}>
            <Svg w={48} h={48} box="0 0 48 48">
              <clipPath id="av"><circle cx="24" cy="24" r="24" /></clipPath>
              <g clipPath="url(#av)"><P d="M0 0H48V48H0Z" f="#a3b6cf" /><P d="M0 42Q14 40 17 35Q16 29 13 24Q10 4 24 2Q38 4 35 24Q32 29 31 35Q34 40 48 42V48H0Z" f="#56667c" /></g>
            </Svg>
          </SquareButton>
        </Account>
      </TopRow>

      <Ribbon>
        <Workspace aria-haspopup="menu">DESIGN <Caret /></Workspace>
        <RibbonMain>
          <Tabs>
            {['SOLID', 'SURFACE', 'MESH', 'SHEET METAL', 'PLASTIC', 'MANAGE', 'UTILITIES'].map((t) => (
              <Tab key={t} $active={t === 'SOLID'}>{t}</Tab>
            ))}
          </Tabs>
          <Groups>
            {groups.map((g) => (
              <Group key={g.label}>
                <Tools>
                  {g.tools.map((t) => <Tool key={t} aria-label={t} $active={t === 'select'}><Icon name={t} /></Tool>)}
                </Tools>
                <GroupLabel>{g.label}<Caret /></GroupLabel>
              </Group>
            ))}
          </Groups>
        </RibbonMain>
      </Ribbon>

      <Viewport>
        <ScrewdriverHandle />
        <Panel>
          <PanelHead>
            <PanelIcon aria-label="Collapse browser"><Svg w={16} h={12} box="0 0 16 12"><P d="M7 0V12L0 6ZM16 0V12L9 6Z" f="#7d8ca5" /></Svg></PanelIcon>
            <PanelTitle>BROWSER</PanelTitle>
            <PanelIcon aria-label="Minimize browser"><Svg w={16} h={4} box="0 0 16 4"><P d="M0 0H16V4H0Z" f={color.muted} /></Svg></PanelIcon>
          </PanelHead>
          <Tree>
            <Row $root>
              <button aria-label="Collapse"><Chevron open /></button>
              <RootChip>
                <RootCell aria-label="Toggle visibility"><Eye /></RootCell>
                <RootName><Svg w={28} h={28}><Cube /></Svg>Ricky_Screwdriver3 v13</RootName>
                <RootCell aria-label="Activate component"><Svg w={24} h={24} box="0 0 24 24"><circle cx="12" cy="12" r="9" stroke="#fff" strokeWidth="6" /></Svg></RootCell>
              </RootChip>
            </Row>
            {treeItems.map((it) => (
              <Row key={it.name}>
                <button aria-label={`Expand ${it.name}`}><Chevron /></button>
                <Chip>
                  {it.eye && <button aria-label={`Toggle ${it.name}`}>{it.eye === 'on' ? <Eye /> : <EyeOff />}</button>}
                  {it.kind === 'gear' ? <Gear /> : <Folder />}
                  <ChipText>{it.name}</ChipText>
                </Chip>
              </Row>
            ))}
          </Tree>
        </Panel>
        <ReadOnly>
          <Svg w={24} h={28} box="0 0 24 28"><path fill="#ffa11c" fillRule="evenodd" d="M4 9V8A8 8 0 0 1 20 8V9H24V28H0V9ZM8 9H16V8A4 4 0 0 0 8 8ZM11 15H13V22H11Z" /></Svg>
          <LockLabel>Read-Only:</LockLabel>
          <Notice>Document is not editable</Notice>
          <EditLink href="#edit">Make Editable</EditLink>
        </ReadOnly>
        <CubeBox><ViewCube /></CubeBox>

        <Panel>
          <PanelHead>
            <PanelIcon as="span" />
            <PanelTitle>COMMENTS</PanelTitle>
            <PanelIcon aria-label="Expand comments"><Svg w={16} h={16} box="0 0 16 16"><path d="M8 0V16M0 8H16" stroke={color.muted} strokeWidth="4" /></Svg></PanelIcon>
          </PanelHead>
        </Panel>
        <NavBar>
          {navTools.map((n) => (
            <NavItem key={n.label} aria-label={n.label} $gap={n.gap} $inner={n.inner ?? 0}>
              <Svg w={n.w} h={n.w} box="0 0 32 32">{n.art}</Svg>
              {n.inner && <Caret />}
            </NavItem>
          ))}
        </NavBar>
      </Viewport>

      <Timeline>
        <Player>
          {player.map((p) => (
            <button key={p.label} aria-label={p.label}><Svg w={26} h={32} box="0 0 26 32"><P d={p.d} f={color.muted} /></Svg></button>
          ))}
        </Player>
        <Track>
          {features.map((f, i) => (
            <Step key={i} $last={i === features.length - 1}>
              <Feature $hot={f.endsWith('!')} aria-label={`Feature ${i + 1}`}><Icon name={f.replace('!', '')} size={32} /></Feature>
            </Step>
          ))}
          <Marker><Svg w={24} h={64} box="0 0 24 64"><P d="M0 0H24V10L14 20V64H10V20L0 10Z" f="#cfd1d8" /></Svg></Marker>
        </Track>
        <SquareButton aria-label="Timeline settings"><Gear /></SquareButton>
      </Timeline>
    </Window>
  );
}
